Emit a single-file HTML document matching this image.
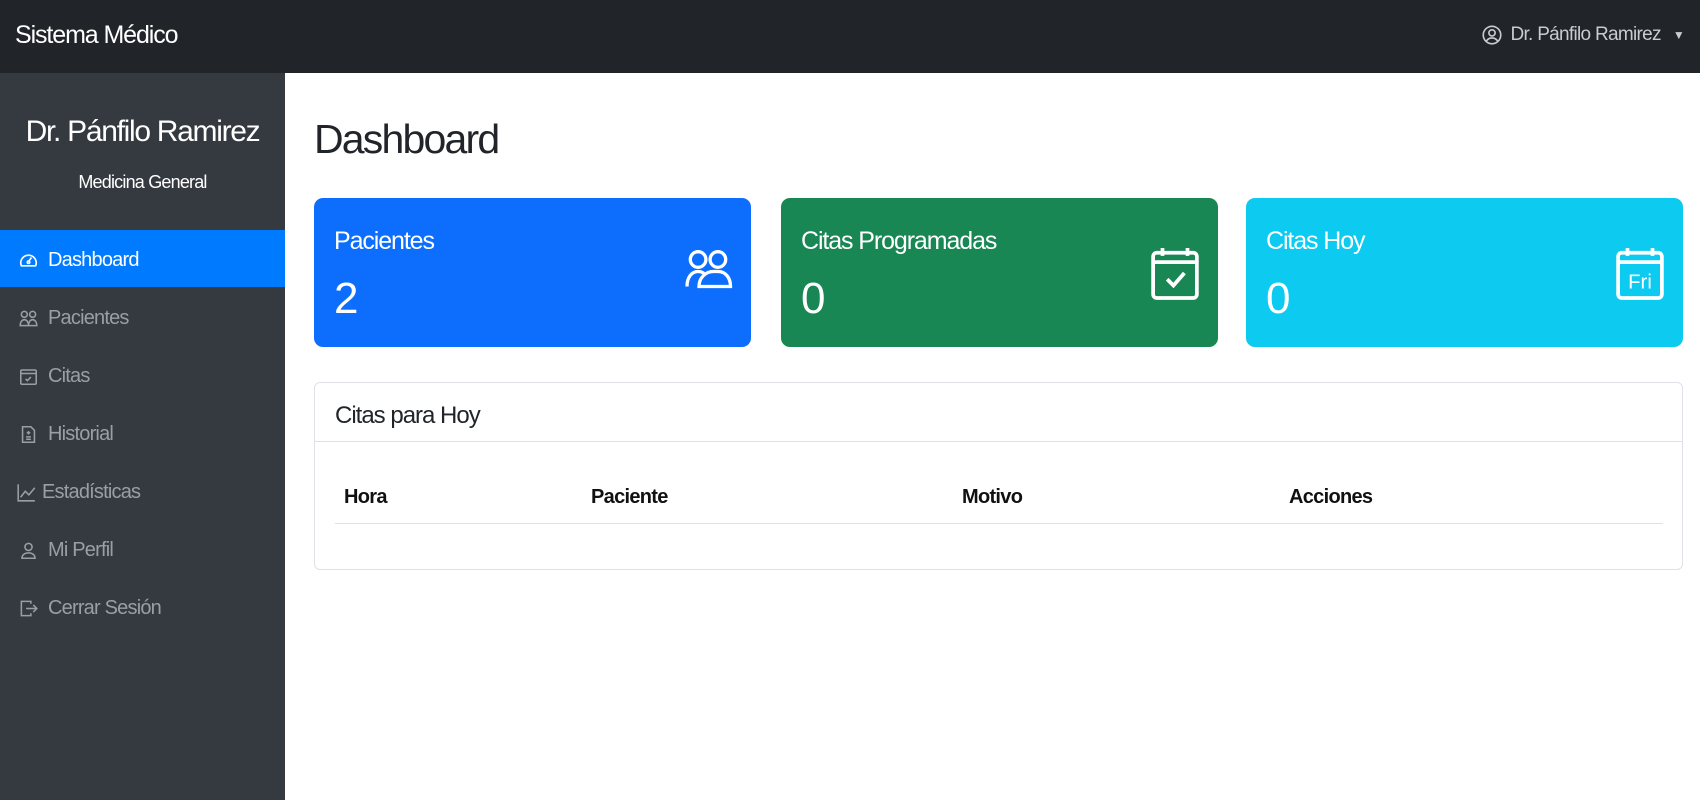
<!DOCTYPE html>
<html><head><meta charset="utf-8"><style>
*{box-sizing:border-box;margin:0;padding:0}
body{width:1700px;height:800px;overflow:hidden;font-family:"Liberation Sans",sans-serif;background:#fff;position:relative}
.nav{position:absolute;left:0;top:0;width:1700px;height:73px;background:#212529;color:#fff}
.brand{position:absolute;left:15px;top:21px;font-size:25px;letter-spacing:-1.1px}
.user{position:absolute;right:16px;top:24px;font-size:19px;color:#c8cbcf;letter-spacing:-0.7px;display:flex;align-items:center;gap:8px}
.side{position:absolute;left:0;top:73px;width:285px;height:727px;background:#343a40;color:#fff}
.side h2{position:absolute;left:0;width:285px;text-align:center;top:42px;font-weight:400;font-size:30px;letter-spacing:-1.3px}
.side .sub{position:absolute;left:0;width:285px;text-align:center;top:99px;font-size:18px;letter-spacing:-0.8px}
.item{position:absolute;left:0;width:285px;height:57px;display:flex;align-items:center;padding-left:19px;gap:10px;font-size:20px;color:#9a9fa5;letter-spacing:-0.8px;padding-top:4px}
.item.active{background:#007bff;color:#fff}
.item svg{width:19px;height:19px;flex:none}
h1{position:absolute;left:314px;top:116px;font-weight:400;font-size:41px;color:#212529;letter-spacing:-1.8px}
.card{position:absolute;top:198px;width:437px;height:149px;border-radius:9px;color:#fff}
.card .t{position:absolute;left:20px;top:29px;font-size:25px;letter-spacing:-1.1px}
.card .n{position:absolute;left:20px;top:76px;font-size:44px}
.card svg{position:absolute;right:18px;top:48px}
.tbl{position:absolute;left:314px;top:382px;width:1369px;height:188px;border:1px solid #dee2e6;border-radius:6px}
.tbl .hd{height:59px;border-bottom:1px solid #dee2e6;background:#fff;padding:19px 20px;font-size:24px;color:#212529;letter-spacing:-1px;border-radius:6px 6px 0 0}
.th{position:absolute;top:103px;font-weight:700;font-size:20px;color:#111;letter-spacing:-0.7px}
.line{position:absolute;left:20px;right:19px;top:140px;border-top:1px solid #dee2e6}
</style></head><body>
<div class="nav"><div class="brand">Sistema Médico</div>
<div class="user"><svg width="20" height="20" viewBox="0 0 16 16" fill="none" stroke="#c8cbcf" stroke-width="1.3"><circle cx="8" cy="8" r="7"/><circle cx="8" cy="6.3" r="2.5"/><path d="M3.3 13c1.3-2 2.8-2.7 4.7-2.7s3.4.7 4.7 2.7"/></svg>Dr. Pánfilo Ramirez<span style="font-size:12px;margin-left:4px">▼</span></div></div>
<div class="side">
<h2>Dr. Pánfilo Ramirez</h2><div class="sub">Medicina General</div>
<div class="item active" style="top:157px"><svg viewBox="0 0 16 16" fill="none" stroke="#fff" stroke-width="1.4"><path d="M2 12.5A6.5 6.5 0 1 1 14 12.5Z"/><path d="M8 9l2.5-3.5"/><circle cx="8" cy="9.5" r="1"/></svg>Dashboard</div>
<div class="item" style="top:215px"><svg viewBox="0 0 16 16" fill="none" stroke="#9a9fa5" stroke-width="1.3"><circle cx="4.5" cy="4.5" r="2.5"/><circle cx="11.5" cy="4.5" r="2.5"/><path d="M1 14c0-3 1.5-5 3.5-5s3.5 2 3.5 5zM8 14c0-3 1.5-5 3.5-5s3.5 2 3.5 5z"/></svg>Pacientes</div>
<div class="item" style="top:273px"><svg viewBox="0 0 16 16" fill="none" stroke="#9a9fa5" stroke-width="1.3"><rect x="1.5" y="2.5" width="13" height="12" rx="1"/><path d="M1.5 5.5h13M5.5 10l1.5 1.5 3-3"/></svg>Citas</div>
<div class="item" style="top:331px"><svg viewBox="0 0 16 16" fill="none" stroke="#9a9fa5" stroke-width="1.3"><path d="M3 1.5h7l3 3v10H3z"/><path d="M6 10h4M6 12h4M8 5v3M6.5 6.5h3"/></svg>Historial</div>
<div class="item" style="top:389px;padding-left:17px;gap:6px"><svg viewBox="0 0 16 16" fill="none" stroke="#9a9fa5" stroke-width="1.3"><path d="M1 1v14h14"/><path d="M3 12l4-5 3 3 5-6"/></svg>Estadísticas</div>
<div class="item" style="top:447px"><svg viewBox="0 0 16 16" fill="none" stroke="#9a9fa5" stroke-width="1.3"><circle cx="8" cy="5" r="3"/><path d="M2.5 14.5c0-3 2.5-4.5 5.5-4.5s5.5 1.5 5.5 4.5z"/></svg>Mi Perfil</div>
<div class="item" style="top:505px"><svg viewBox="0 0 16 16" fill="none" stroke="#9a9fa5" stroke-width="1.3"><path d="M10 4V2H2v12h8v-2"/><path d="M6 8h9M12 5l3 3-3 3"/></svg>Cerrar Sesión</div>
</div>
<h1>Dashboard</h1>
<div class="card" style="left:314px;background:#0d6efd"><div class="t">Pacientes</div><div class="n">2</div>
<svg width="50" height="48" viewBox="0 0 16 16" fill="none" stroke="#fff" stroke-width="1.1"><circle cx="4.7" cy="4.5" r="2.6"/><circle cx="11.3" cy="4.5" r="2.6"/><path d="M1 13.5c0-3 1.5-5 3.7-5 1.2 0 2 .5 2.6 1.3M5 13.5c0-3 2.3-5 4.8-5h1.5c2.5 0 4.2 2 4.2 5z"/></svg></div>
<div class="card" style="left:781px;background:#198754"><div class="t">Citas Programadas</div><div class="n">0</div>
<svg width="50" height="58" viewBox="0 0 16 18" fill="none" stroke="#fff" stroke-width="1.2" style="top:46px"><rect x="1" y="2.5" width="14" height="14.5" rx="1.2"/><path d="M1 5.5h14M4 1v2.5M12 1v2.5M5.5 11l2 2 3.5-4"/></svg></div>
<div class="card" style="left:1246px;background:#0dcaf0"><div class="t">Citas Hoy</div><div class="n">0</div>
<svg width="50" height="58" viewBox="0 0 16 18" fill="none" stroke="#fff" stroke-width="1.2" style="top:46px"><rect x="1" y="2.5" width="14" height="14.5" rx="1.2"/><path d="M1 5.5h14M4 1v2.5M12 1v2.5"/><text x="8" y="14" text-anchor="middle" font-family="Liberation Sans" font-size="6.5" fill="#fff" stroke="none">Fri</text></svg></div>
<div class="tbl"><div class="hd">Citas para Hoy</div>
<div class="th" style="left:29px">Hora</div><div class="th" style="left:276px">Paciente</div><div class="th" style="left:647px">Motivo</div><div class="th" style="left:974px">Acciones</div>
<div class="line"></div></div>
</body></html>
